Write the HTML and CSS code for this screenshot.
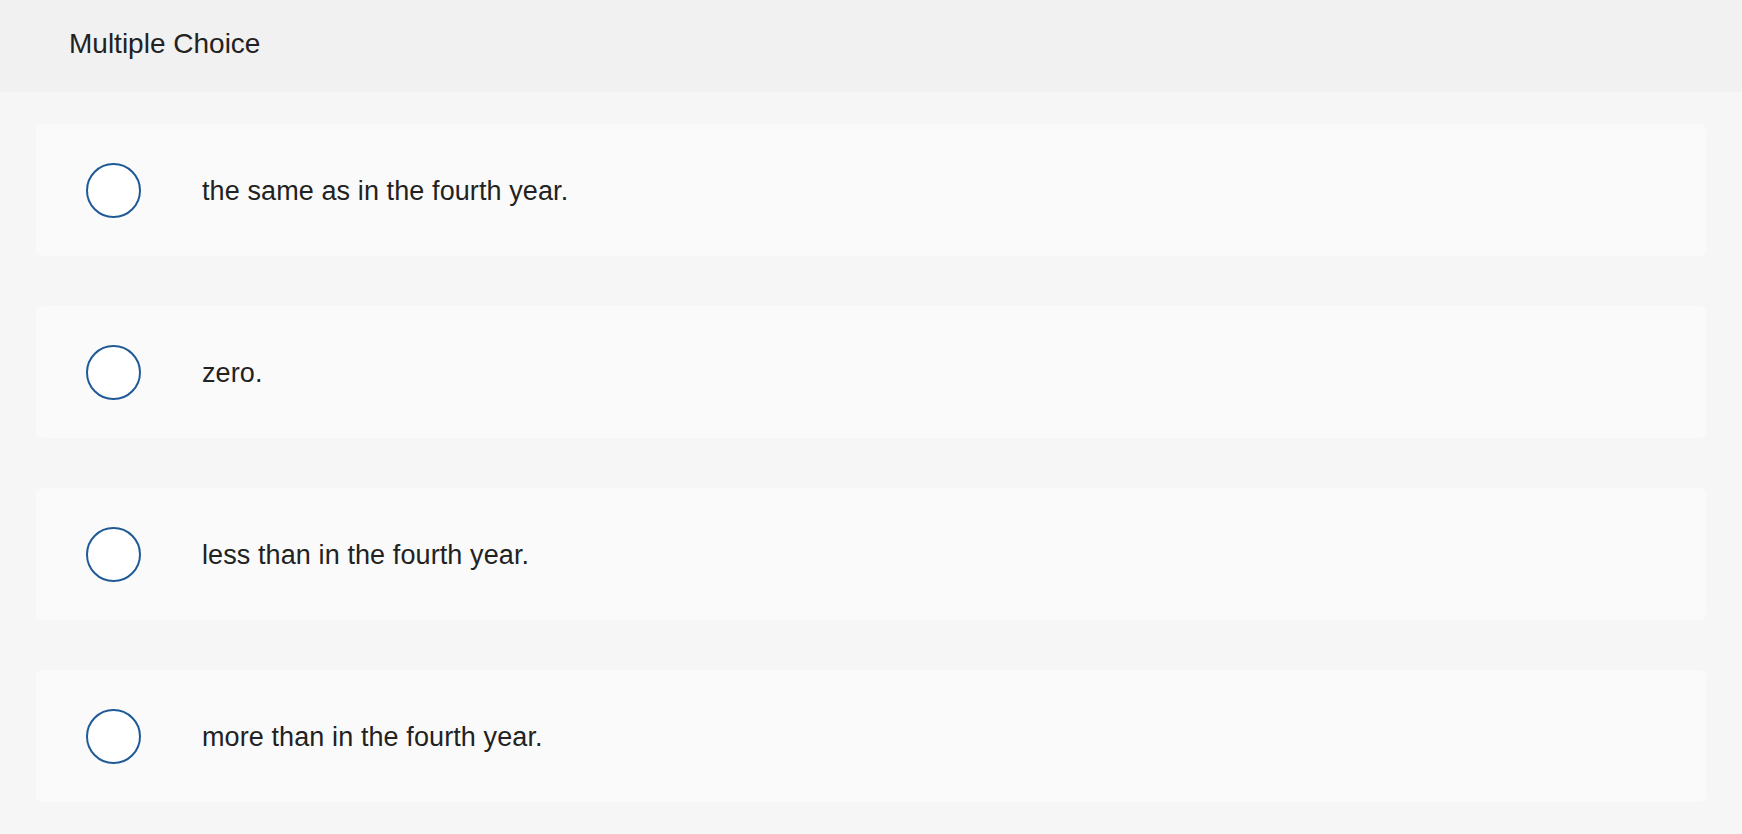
FILE: index.html
```html
<!DOCTYPE html>
<html lang="en">
<head>
<meta charset="utf-8">
<title>Multiple Choice</title>
<link rel="stylesheet" href="styles.css">
</head>
<body>
<header class="header">
  <h1 class="title">Multiple Choice</h1>
</header>
<main class="choices">
  <label class="choice"><span class="radio"></span><span class="choice-text">the same as in the fourth year.</span></label>
  <label class="choice"><span class="radio"></span><span class="choice-text">zero.</span></label>
  <label class="choice"><span class="radio"></span><span class="choice-text">less than in the fourth year.</span></label>
  <label class="choice"><span class="radio"></span><span class="choice-text">more than in the fourth year.</span></label>
</main>
</body>
</html>
```
FILE: styles.css
```css
* { box-sizing: border-box; }
html, body {
  margin: 0;
  padding: 0;
  background: #f6f6f6;
  font-family: "Liberation Sans", Arial, sans-serif;
  color: #222222;
}
.header {
  height: 92px;
  background: #f1f1f1;
  display: flex;
  align-items: center;
  padding: 0 0 6px 69px;
}
.title {
  margin: 0;
  font-size: 28px;
  font-weight: normal;
  line-height: 31px;
}
.choices {
  display: flex;
  flex-direction: column;
  gap: 50px;
  padding: 32px 36px;
}
.choice {
  height: 132px;
  background: #fafafa;
  border-radius: 6px;
  display: flex;
  align-items: center;
  padding-left: 50px;
}
.radio {
  width: 55px;
  height: 55px;
  border-radius: 50%;
  border: 2px solid #1f5a96;
  background: #ffffff;
  flex: none;
}
.choice-text {
  margin-left: 61px;
  font-size: 27px;
  letter-spacing: 0.1px;
  line-height: 31px;
  padding-top: 2px;
}
```
